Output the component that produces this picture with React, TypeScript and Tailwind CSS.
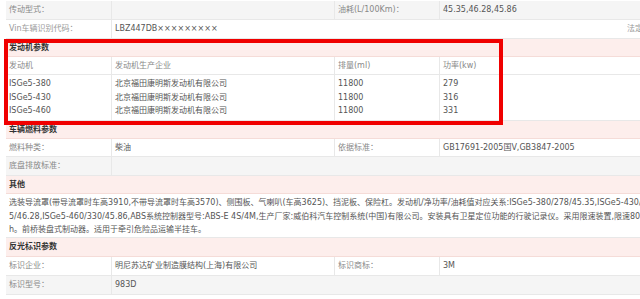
import type { ReactNode } from "react";
import clsx from "clsx";

const FONT = "font-['DejaVu_Sans','Noto_Sans_CJK_SC',sans-serif]";

const Cell = ({ children, className }: { children?: ReactNode; className?: string }) => (
  <div className={clsx("pl-[3px] flex items-center border-r border-[#e8e8e8] whitespace-nowrap", className)}>
    {children}
  </div>
);

const Row = ({ children, className }: { children: ReactNode; className?: string }) => (
  <div className={clsx("grid grid-cols-[106px_223px_105px_1fr] border-b border-[#e8e8e8]", className)}>
    {children}
  </div>
);

const Section = ({ title, className }: { title: string; className?: string }) => (
  <div className={clsx("flex items-center pl-[3px] bg-[#fdeeec] border-b border-[#f5dcd8] font-bold text-[#333]", className)}>
    {title}
  </div>
);

const ENGINES = [
  { model: "ISGe5-380", maker: "北京福田康明斯发动机有限公司", cc: "11800", kw: "279" },
  { model: "ISGe5-430", maker: "北京福田康明斯发动机有限公司", cc: "11800", kw: "316" },
  { model: "ISGe5-460", maker: "北京福田康明斯发动机有限公司", cc: "11800", kw: "331" },
];

const NOTE = [
  "选装导流罩(带导流罩时车高3910,不带导流罩时车高3570)、侧围板、气喇叭(车高3625)、挡泥板、保险杠。发动机/净功率/油耗值对应关系:ISGe5-380/278/45.35,ISGe5-430/316/4",
  "5/46.28,ISGe5-460/330/45.86,ABS系统控制器型号:ABS-E 4S/4M,生产厂家:威伯科汽车控制系统(中国)有限公司。安装具有卫星定位功能的行驶记录仪。采用限速装置,限速80km/",
  "h。前桥装盘式制动器。适用于牵引危险品运输半挂车。",
];

export default function App() {
  return (
    <div className={clsx("relative w-[640px] h-[299px] overflow-hidden bg-white text-[8px] text-[#555]", FONT)}>
      <div className="w-[780px] ml-[6px] pt-[1px]">
        <Row className="h-[19px] bg-[#f5f5f5]">
          <Cell className="text-[#888]">传动型式：</Cell>
          <Cell />
          <Cell className="text-[#888]">油耗(L/100Km)：</Cell>
          <Cell>45.35,46.28,45.86</Cell>
        </Row>
        <Row className="h-[19px]">
          <Cell className="text-[#999]">Vin车辆识别代码：</Cell>
          <Cell className="col-span-3 border-r-0">
            <span className="w-[512px]">LBZ447DB×××××××××</span>
            <span className="text-[#999]">法定VIN码</span>
          </Cell>
        </Row>

        <Section title="发动机参数" className="h-[18px]" />
        <Row className="h-[18px]">
          <Cell className="text-[#888]">发动机</Cell>
          <Cell className="text-[#888]">发动机生产企业</Cell>
          <Cell className="text-[#888]">排量(ml)</Cell>
          <Cell className="text-[#888]">功率(kw)</Cell>
        </Row>
        <Row className="h-[46px]">
          {(["model", "maker", "cc", "kw"] as const).map((k) => (
            <Cell key={k} className="flex-col items-start pt-[2px] leading-[13.5px]">
              {ENGINES.map((e) => (
                <div key={e.model}>{e[k]}</div>
              ))}
            </Cell>
          ))}
        </Row>

        <Section title="车辆燃料参数" className="h-[18px]" />
        <Row className="h-[18px]">
          <Cell className="text-[#888]">燃料种类：</Cell>
          <Cell>柴油</Cell>
          <Cell className="text-[#888]">依据标准：</Cell>
          <Cell>GB17691-2005国V,GB3847-2005</Cell>
        </Row>
        <Row className="h-[19px] bg-[#f5f5f5]">
          <Cell className="text-[#888]">底盘排放标准：</Cell>
          <Cell className="col-span-3 border-r-0" />
        </Row>

        <Section title="其他" className="h-[18px]" />
        <div className="h-[44px] pl-[3px] pt-[2px] leading-[13.5px] border-b border-[#e8e8e8]">
          {NOTE.map((line) => (
            <div key={line} className="whitespace-nowrap">{line}</div>
          ))}
        </div>

        <Section title="反光标识参数" className="h-[19px]" />
        <Row className="h-[19px]">
          <Cell className="text-[#888]">标识企业：</Cell>
          <Cell>明尼苏达矿业制造膜结构(上海)有限公司</Cell>
          <Cell className="text-[#888]">标识商标：</Cell>
          <Cell>3M</Cell>
        </Row>
        <Row className="h-[19px] bg-[#f5f5f5]">
          <Cell className="text-[#888]">标识型号：</Cell>
          <Cell className="col-span-3 border-r-0">983D</Cell>
        </Row>
      </div>

      {/* annotation box around engine params */}
      <div className="absolute left-[4px] top-[39px] w-[499px] h-[86px] border-[4px] border-[#f00000] pointer-events-none" />
    </div>
  );
}
